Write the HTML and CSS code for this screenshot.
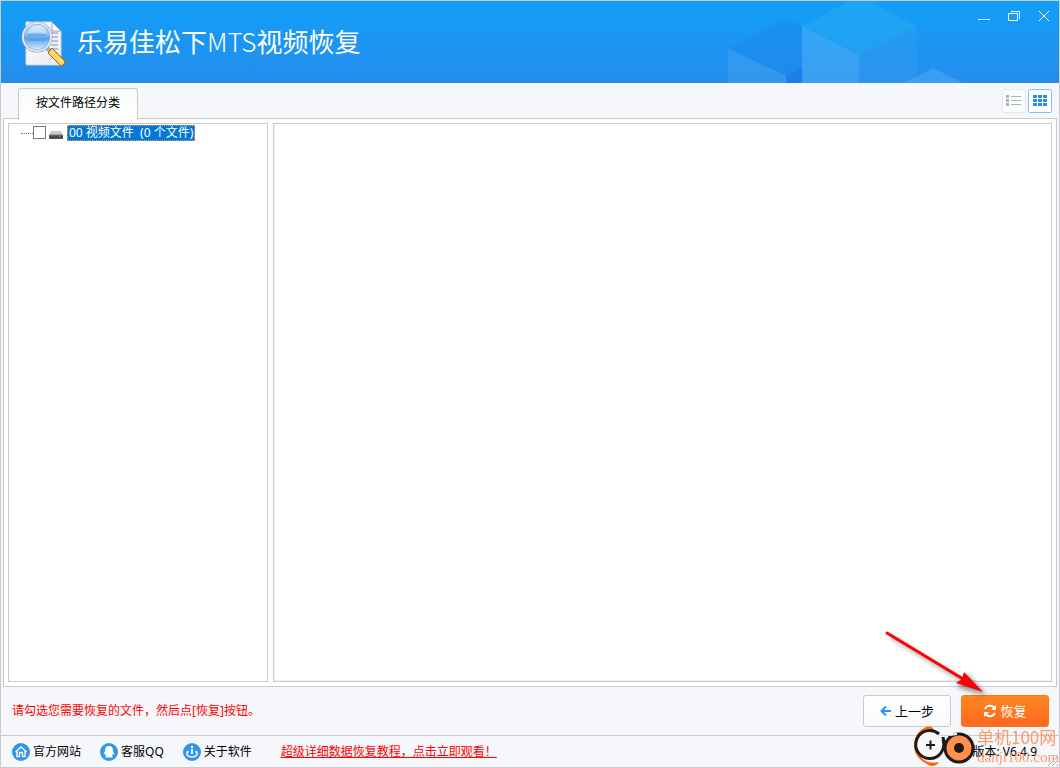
FILE: index.html
```html
<!DOCTYPE html>
<html lang="zh-CN">
<head>
<meta charset="utf-8">
<title>乐易佳松下MTS视频恢复</title>
<link rel="stylesheet" href="styles.css">
</head>
<body>
<div class="window">
  <header class="header">
    <svg class="cubes" width="338" height="82" viewBox="0 0 338 82" aria-hidden="true">
      <path d="M7 47 65 18 82 25V68L65 75Z" fill="#1776e6" opacity=".22"/>
      <path d="M7 47 65 75V82H7Z" fill="#5ab0f8" opacity=".28"/>
      <path d="M65 75 82 67V82H65Z" fill="#1670e8" opacity=".5"/>
      <path d="M81 25 129 0H148L196 25 138 54Z" fill="#27b5f2" opacity=".4"/>
      <path d="M81 25 138 54V82H81Z" fill="#5bb7f8" opacity=".42"/>
      <path d="M138 54 196 25V82H138Z" fill="#3ba3f1" opacity=".3"/>
      <path d="M183 82 212 67 242 82Z" fill="#55b2fa" opacity=".45"/>
    </svg>
    <svg class="logo" width="46" height="48" viewBox="0 0 46 48" aria-hidden="true">
      <defs>
        <linearGradient id="paper" x2="1" y2="1"><stop stop-color="#fff"/><stop offset="1" stop-color="#e7eaf4"/></linearGradient>
        <linearGradient id="lens" x2="0" y2="1"><stop stop-color="#d9edff"/><stop offset=".45" stop-color="#79b8f5"/><stop offset=".55" stop-color="#5ba2ec"/><stop offset="1" stop-color="#d7fbff"/></linearGradient>
        <linearGradient id="handle" x1="0" y1="1" x2="1" y2="0"><stop stop-color="#c86e08"/><stop offset=".45" stop-color="#ffdc66"/><stop offset="1" stop-color="#e69416"/></linearGradient>
      </defs>
      <path d="M6 3H32L41 12V46H6Z" fill="#266aa8" opacity=".5"/>
      <path d="M5 2H31L40 11V44Q40 45 39 45H6Q5 45 5 44Z" fill="url(#paper)" stroke="#d5d9e7"/>
      <path d="M31 2V11H40Z" fill="#fff" stroke="#8ba5c6"/>
      <path d="M28 13H37M30 17H37M30 21H37M30 25H37M27 29H37" stroke="#7791b8"/>
      <path d="M25 27 31 33" stroke="#a9adb8" stroke-width="4"/>
      <circle cx="16" cy="17" r="14" fill="url(#lens)" stroke="#8299bc" stroke-width="3"/>
      <circle cx="16" cy="17" r="14" fill="none" stroke="#e4e9f3" stroke-width="2"/>
      <path d="M7 15H25M8 20H24" stroke="#4b8ed7" stroke-width="2" opacity=".4"/>
      <path d="M6 14Q10 5 19 6 25 7 26 14 15 11 6 14Z" fill="#fff" opacity=".4"/>
      <path d="M27 33 31 28 44 41Q45 44 40 46Z" fill="url(#handle)" stroke="#ad5f12"/>
      <path d="M31 31 41 42" stroke="#fff0a1"/>
    </svg>
    <h1 class="title">乐易佳松下<span class="title-latin">MTS</span>视频恢复</h1>
    <div class="window-controls">
      <button class="window-button" aria-label="最小化"><svg width="12" height="12" viewBox="0 0 12 12"><path d="M0 9.500H12" /></svg></button>
      <button class="window-button" aria-label="还原"><svg width="12" height="12" viewBox="0 0 12 12"><path d="M.5 3.500H9.500V10.500H.5ZM3 1.500H11.500V9"/></svg></button>
      <button class="window-button" aria-label="关闭"><svg width="12" height="12" viewBox="0 0 12 12"><path d="M1 1 11 11M11 1 1 11"/></svg></button>
    </div>
  </header>

  <nav class="toolbar">
    <button class="tab">按文件路径分类</button>
    <div class="views">
      <button class="view" aria-label="列表视图"><svg width="16" height="12" viewBox="0 0 16 12"><path d="M0 0H3V3H0ZM0 4H3V7H0ZM0 8H3V11H0ZM5 1H15V2H5ZM5 5H15V6H5ZM5 9H15V10H5Z" fill="#acb1b7"/></svg></button>
      <button class="view view-active" aria-label="图标视图"><svg width="14" height="12" viewBox="0 0 14 12"><path d="M0 0H4V3H0ZM5 0H9V3H5ZM10 0H14V3H10ZM0 4H4V7H0ZM5 4H9V7H5ZM10 4H14V7H10ZM0 8H4V11H0ZM5 8H9V11H5ZM10 8H14V11H10Z" fill="#218ee9"/></svg></button>
    </div>
  </nav>

  <main class="workspace">
    <aside class="tree">
      <div class="node">
        <span class="branch"></span>
        <input class="check" type="checkbox" id="video-files">
        <svg class="drive" width="14" height="8" viewBox="0 0 14 8" aria-hidden="true"><path d="M2 0H12L14 4H0Z" fill="#c9cbca"/><path d="M0 4H14V7Q14 8 13 8H1Q0 8 0 7Z" fill="#484c4b"/><path d="M0 4H14" stroke="#7c807e"/><path d="M10 6H11" stroke="#55ed55"/></svg>
        <label class="node-label" for="video-files">00 视频文件&nbsp; (0 个文件)</label>
      </div>
    </aside>
    <section class="files" aria-label="文件"></section>
  </main>

  <section class="actions">
    <p class="hint">请勾选您需要恢复的文件，然后点[恢复]按钮。</p>
    <div class="buttons">
      <button class="action"><svg width="12" height="12" viewBox="0 0 12 12"><path d="M11 6H2M6 1.500 1.500 6 6 10.500" fill="none" stroke="#2795ed" stroke-width="2"/></svg>上一步</button>
      <button class="action action-primary"><svg width="14" height="14" viewBox="0 0 14 14"><path d="M2 5A5.500 5.500 0 0 1 11 3.500M12 9A5.500 5.500 0 0 1 3 10.500" fill="none" stroke="#fff" stroke-width="2"/><path d="M13 1V6H8ZM1 13V8H6Z" fill="#fff"/></svg>恢复</button>
    </div>
  </section>

  <footer class="status">
    <a class="status-link" href="#site"><svg width="18" height="18" viewBox="0 0 18 18"><circle cx="9" cy="9" r="9" fill="#2e96ef"/><path d="M3.500 9 9 4 14.500 9M5 8V13.500H7.500V9.500H10.500V13.500H13V8" fill="none" stroke="#fff" stroke-width="1.300"/></svg>官方网站</a>
    <a class="status-link" href="#support"><svg width="18" height="18" viewBox="0 0 18 18"><circle cx="9" cy="9" r="9" fill="#2e96ef"/><path d="M9 3C6 3 5 5 5 8L3.500 11.500 5 11 6 13 5 14.500H13L12 13 13 11 14.500 11.500 13 8C13 5 12 3 9 3Z" fill="#fff"/></svg>客服QQ</a>
    <a class="status-link" href="#about"><svg width="18" height="18" viewBox="0 0 18 18"><circle cx="9" cy="9" r="9" fill="#2e96ef"/><path d="M8 3H10V5H8ZM8 6H10V11H8Z" fill="#fff"/><path d="M6 9H4Q3 14 9 14 15 14 14 9H12" fill="none" stroke="#fff" stroke-width="1.500"/></svg>关于软件</a>
    <a class="tutorial" href="#tutorial">超级详细数据恢复教程，点击立即观看！</a>
    <span class="version">版本: V6.4.9</span>
  </footer>

  <svg class="pointer" width="106" height="70" viewBox="0 0 106 70" aria-hidden="true">
    <g fill="#333" stroke="#333" opacity=".5" class="pointer-shadow"><path d="M7 8 82 54" stroke-width="3"/><path d="M75 59 84 46 103 67Z"/></g>
    <path d="M4 5 80 51" stroke="#f00" stroke-width="3" stroke-linecap="round"/>
    <path d="M73 55 79 51 81 44 100 64Z" fill="#f00"/>
  </svg>
  <div class="watermark">
    <svg width="64" height="42" viewBox="0 0 64 42" aria-hidden="true">
      <path d="M15 3Q4 7 3 20 3 34 20 40" fill="none" stroke="#f60" stroke-width="2"/>
      <path d="M9 6Q14 0 20 2L22 5Q15 4 9 8ZM13 36Q19 39 27 37 23 43 16 40Z" fill="#f60"/>
      <path d="M27 9A14 14 0 1 0 31 15" fill="#f7f8f9" stroke="#221815" stroke-width="3"/>
      <path d="M14 20H23M18.500 15.500V24.500" stroke="#221815" stroke-width="2"/>
      <circle cx="47" cy="23" r="14" fill="#ff914d" stroke="#221815" stroke-width="3"/>
      <path d="M31 12Q31 16 34 18M37 13 39 11" fill="none" stroke="#221815" stroke-width="3"/>
      <path d="M37 10 45 9" stroke="#f5f7fa" stroke-width="2"/>
      <circle cx="47" cy="23" r="5" fill="#221815"/>
    </svg>
    <div class="watermark-text"><span class="watermark-name">单机100网</span><span class="watermark-site">danji100.com</span></div>
  </div>
  <svg class="grip" width="12" height="12" viewBox="0 0 12 12" aria-hidden="true"><path d="M1 11 11 1M5 11 11 5M9 11 11 9" stroke="#b8bbbf"/></svg>
</div>
</body>
</html>
```
FILE: styles.css
```css
* { box-sizing: border-box; }
body {
  margin: 0;
  font: 12px/16px "Noto Sans", "Noto Sans CJK SC", sans-serif;
  color: #000;
}
button { font: inherit; padding: 0; margin: 0; }
svg { display: block; flex: none; }
.window {
  position: relative;
  display: flex;
  flex-direction: column;
  min-height: 100vh;
  border: 1px solid #c8cacc;
  background: #f5f7fa;
}
.header {
  position: relative;
  display: flex;
  align-items: center;
  height: 82px;
  padding: 4px 0 0 20px;
  gap: 10px;
  background: linear-gradient(#109ff8, #268dec);
}
.cubes { position: absolute; top: 0; right: 0; }
.title {
  margin: 0;
  padding-bottom: 6px;
  color: #fff;
  font-family: "Noto Sans CJK SC", sans-serif;
  font-size: 26px;
  font-weight: 400;
  line-height: 40px;
}
.title-latin { font-weight: 300; }
.window-controls {
  position: absolute;
  top: 8px;
  right: 9px;
  display: flex;
  gap: 18px;
}
.window-button {
  width: 12px;
  height: 14px;
  border: 0;
  background: none;
}
.window-button path { fill: none; stroke: #fff; }
.toolbar {
  display: flex;
  justify-content: space-between;
  align-items: flex-end;
  height: 36px;
  padding: 0 7px 0 17px;
}
.tab {
  position: relative;
  width: 120px;
  height: 32px;
  margin-bottom: -1px;
  padding-bottom: 4px;
  border: 1px solid #c8cacc;
  border-bottom: 0;
  border-radius: 3px 3px 0 0;
  background: linear-gradient(#f8faf9, #fff);
}
.views {
  display: flex;
  gap: 2px;
  align-self: center;
}
.view {
  display: flex;
  align-items: center;
  justify-content: center;
  width: 24px;
  height: 24px;
  border: 1px solid #e4e6e9;
  border-radius: 2px;
  background: #fcfdfd;
}
.view-active { border-color: #82c2f7; background: #fff; }
.workspace {
  display: flex;
  flex: 1;
  gap: 5px;
  margin: -1px 2px 0;
  padding: 4px;
  border: 1px solid #c8cacc;
  background: #fff;
}
.tree {
  width: 260px;
  padding: 1px 12px;
  border: 1px solid #c8cacc;
}
.files {
  flex: 1;
  border: 1px solid #c8cacc;
  box-shadow: inset 1px -1px #f0f0f0;
}
.node { display: flex; align-items: center; height: 16px; }
.branch { width: 12px; border-top: 1px dotted #777; }
.check {
  appearance: none;
  width: 13px;
  height: 13px;
  margin: 0 3px 2px 0;
  border: 1px solid #777;
  background: #fff;
}
.drive { margin-top: 4px; }
.node-label {
  margin-left: 4px;
  padding: 0 1px;
  border: 1px dotted #ff9a42;
  background: #0078d7;
  color: #fff;
  line-height: 14px;
  white-space: nowrap;
}
.actions {
  display: flex;
  align-items: center;
  justify-content: space-between;
  height: 48px;
  padding: 0 10px 0 11px;
}
.hint { margin: 0; color: #f00; }
.buttons { display: flex; gap: 10px; }
.action {
  display: flex;
  align-items: center;
  justify-content: center;
  gap: 3px;
  width: 88px;
  height: 32px;
  border: 1px solid #c8cacc;
  border-radius: 3px;
  background: linear-gradient(#fff, #f8f9fa);
  font-size: 13px;
}
.action-primary {
  border-color: #ff7320;
  background: linear-gradient(#ff861f, #ff6820);
  color: #fff;
}
.status {
  display: flex;
  align-items: center;
  height: 32px;
  padding: 0 22px 0 11px;
  border-top: 1px solid #c8cacc;
}
.status-link {
  display: flex;
  align-items: center;
  gap: 3px;
  margin-right: 19px;
  color: #000;
  text-decoration: none;
}
.tutorial { margin-left: 10px; color: #f00; }
.version { margin-left: auto; }
.pointer {
  position: absolute;
  right: 70px;
  bottom: 69px;
  pointer-events: none;
}
.pointer-shadow { filter: blur(2px); }
.watermark {
  position: absolute;
  right: 0;
  bottom: 0;
  display: flex;
  gap: 1px;
  pointer-events: none;
}
.watermark-text {
  display: flex;
  flex-direction: column;
  width: 82px;
  color: #ff8c4d;
  opacity: .85;
  white-space: nowrap;
}
.watermark-name { font-family: "Noto Sans CJK SC", sans-serif; font-size: 17px; line-height: 24px; }
.watermark-site { font: 15px/16px "Liberation Serif", serif; }
.grip { position: absolute; right: 0; bottom: 0; }
```
